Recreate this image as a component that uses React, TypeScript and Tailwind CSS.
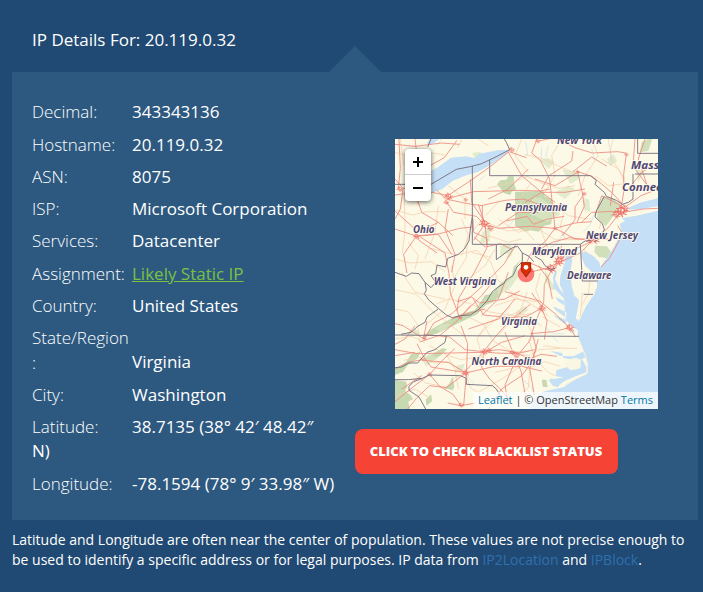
import React from "react";

const rows: { label: string; value: string; link?: boolean }[] = [
  { label: "Decimal:", value: "343343136" },
  { label: "Hostname:", value: "20.119.0.32" },
  { label: "ASN:", value: "8075" },
  { label: "ISP:", value: "Microsoft Corporation" },
  { label: "Services:", value: "Datacenter" },
  { label: "Assignment:", value: "Likely Static IP", link: true },
  { label: "Country:", value: "United States" },
  { label: "State/Region:", value: "Virginia" },
  { label: "City:", value: "Washington" },
  { label: "Latitude:", value: "38.7135 (38° 42′ 48.42″ N)" },
  { label: "Longitude:", value: "-78.1594 (78° 9′ 33.98″ W)" },
];

const places: [string, number, number, number][] = [
  ["New York", 162, 5, 45],
  ["Massachusetts", 236, 29.5, 82],
  ["Connecticut", 227, 51.5, 65],
  ["Pennsylvania", 110, 72, 62],
  ["Ohio", 18, 94, 21.5],
  ["New Jersey", 191, 99.5, 52],
  ["Maryland", 137, 115.5, 45],
  ["Delaware", 172, 139.5, 44.5],
  ["West Virginia", 39, 146, 62],
  ["Virginia", 106, 185.5, 36],
  ["North Carolina", 76.5, 226, 70],
];

// Urban centres: x, y and the radius of the street cluster.
const cities: [number, number, number][] = [
  [678, 216, 22], [664, 226, 16], [690, 208, 14], [600, 300, 18], [584, 306, 12], [492, 366, 18], [468, 388, 18], [500, 356, 10],
  [441, 508, 14], [524, 566, 16], [268, 254, 18], [286, 268, 12], [160, 172, 15], [154, 190, 10], [64, 292, 12], [268, 638, 13],
  [282, 634, 10], [212, 702, 13], [198, 798, 10], [352, 640, 11], [366, 650, 9], [350, 32, 11], [548, 98, 7], [694, 46, 8],
  [428, 6, 9], [14, 150, 11], [568, 164, 8], [480, 268, 8], [104, 706, 9], [88, 598, 8], [196, 536, 8], [212, 182, 8], [776, 140, 7],
];

function MapDrawing() {
  return (
    <svg viewBox="0 0 789 810" className="block h-[270px] w-[263px]">
      <rect width="789" height="810" fill="#fcfae6" />
      <g fill="#c6d9b0">
        <path d="M306 136l10-12 18-2 6-10 16 0 2 26 6 12-14 8-4 10-20-6-6-10zM360 158l84-2 6 16 20 8 6 30 10 10-14 14-4 22-20 4-16 18-26-4-16 4-30-18zM378 362L356 384 350 412 318 432 298 456 286 466 270 468 250 500 238 514 196 526 150 548 104 574 82 596 124 584 196 550 246 526 272 498 296 488 318 468 330 436 352 416 362 388z" />
        <path d="M0 690l34-22 14-22 28-8-8 20-30 20-14 20-24 10zM0 722L34 728 36 744 30 756 46 768 54 780 40 788 44 810H0zM148 750l16-16 8-22 6 30-4 12-16-4zM86 660l28-16 28-16 14 2-20 20-26 16zM92 782l16-16 4 20-18 14z" />
        <path d="M624 172l30 6 24 22-20 28-26 34-26-26 4-32zM600 320l36 2 12 18-10 18-26-4-14-14zM740 10l18-10h14l-12 36-26 4z" opacity=".8" />
        <path d="M440 722l14 0 4 22-14 0zM466 718l12 6 12 20-16-4z" />
      </g>
      <g fill="#d9e5c3" opacity=".75">
        <path d="M434 64l24-8 20 12-16 22zM502 92l44 4 10 22-30 16zM232 42l24-4 10 16-26 8zM396 200l26-28 34 42 26-12 14 24-40 24-58-30zM564 176l18 6 4 38-20-8zM262 280l24-14-2 40-30 10zM306 450l34-30 24-30 14 12-32 44-36 24zM316 320l34-4-6 24-28 8zM480 160l40-20 20 10-30 30zM408 196l26-22 40 30-20 40zM636 60l20-14 10 20-20 16zM722 80l22 20-14 30zM450 390l14 30 20 30-16 4-18-30zM340 332l20-10-10 26-16 14z" />
        <path d="M36 580l26-10 14 12-26 12zM76 658l30-14 22 14-34 24zM186 680l22-6-4 22-22 2zM120 570l20-14 30-2-30 24zM360 520l30-20 10 14-26 16z" />
      </g>
      <g fill="#c5dff6">
        <path d="M104 0H132L118 12 104 18 96 12zM108 96L130 84 168 56 214 52 240 58 252 44 310 34 346 32 330 48 286 78 250 98 206 112 172 126 142 150 110 162z" />
        <path d="M789 178L764 184 735 191 705 204 700 212 735 211 770 205 789 202V215L735 228 680 238 690 246 674 254 680 280 664 310 650 336 630 364 616 384 613 370 596 352 574 338 560 340 558 350 570 380 588 396 606 420 606 440 596 468 574 500 564 520 552 548 548 586 556 614 572 656 578 680 576 704 542 720 516 734 508 744 468 752 440 760 420 776 410 792 406 810H789z" />
        <path d="M524 342L532 360 526 400 530 440 538 470 552 482 548 510 542 540 556 544 552 576 534 564 512 542 508 500 506 462 494 436 496 410 508 376 512 352zM480 392L486 402 480 420 494 450 516 476 508 480 476 446 474 416zM508 486L482 474 488 486 510 502zM514 520L474 502 482 514 514 536zM516 544L474 528 510 556zM530 576L538 572 538 584zM502 642L466 636 494 650 536 652 564 638 572 654 558 662 520 660 504 656zM484 694L524 682 540 666 562 662 574 684 574 700 542 712 518 722 500 714 482 712zM460 722L500 716 526 716 500 732 488 744 474 740z" />
      </g>
      <path d="M510 664l34-8 14 8-2 24-28 6-16-12z" fill="#f9f7e2" />
      <g fill="none" stroke="#c8e0ec" strokeWidth="2">
        <path d="M392 8l6 34-4 10M440 24l-2 40M460 18l-8 36M590 28l10 40M654 0l-8 38 2 36M506 280l-18 30-24 18M366 230l-22 30-20 8M450 566l28 18 30 0M320 530l48 14 38-12M238 734l-28-28M140 0l-16 20M600 220l-16 40-20 20M270 110l-18 16M470 590l20 20M380 720l30 24 10 30" />
      </g>
      <path d="M554 606L573 654 578 680 576 704 542 720 510 740 M606 440L596 468 566 500 550 546" fill="none" stroke="#f6f4df" strokeWidth="3" />
      <g fill="none" stroke="#f6cfb0" strokeWidth="2.3" strokeLinejoin="round">
        <path d="M16 0l10 76 34 32M0 212l52 16 42-10 60 0M2 360l42 12 66-4 40 30M28 156l2 118-8 68M200 2l-12 24M278 148l76-18 42-18 48 22 48 14 48-8M390 46l54 14 44 20 58 26M406 134l-30 44 4 50 50 22 20 56M310 190l-50 52-42 54-4 60-40 66M270 248l66 28 52-6 30 34M108 328l76 20 60-14 44 36 20 52 66 60M0 452l64 14 50 52 52 40 46 36M0 510l40 8 28 40 6 54M126 494l36-14 58 12 60 26 74 12 54-6M220 534l46 22 26 48 56 34 54 0M102 620l54 28 42 14 62-10M26 664l46-10 48 18 44-2 42 30M56 702l36 30 60 12 28-28 32-14M212 702l14 44 36 22 20 42M258 640l-12-42 26-30 42-38 32-26M354 640l48 10 30-18 64-4M400 688l50-20 46 14M368 664l36 32-4 50-22 18M396 460l-18 50-30 36-36 40M450 306l14 36 28 26M506 222l-10 40 14 40M420 262l60 40 72 0M624 234l-12 36M562 460l-6 72M584 430l-4 34-20 36M442 534l54 30M390 540l32 66M436 402l-14 50 20 52" />
        <path d="M0 40l60 16 40-16 50 8M250 0l30 20M380 0l-20 50 40 50M500 0l-30 50 10 60-30 50M590 0l20 50-40 60-20 60M60 60l-10 60 20 80M230 340l60 16M90 560l60-50 30-70-10-60M300 330l-30 50-50 40M340 470l60 20 60 40M300 500l60-20 80 10M250 590l30-40 90-30 70 40M150 640l30 50 10 60M400 600l20 60 40 40 20 10M446 620l60 8 40 0M300 700l60-14 60-20M250 760l70-40 60-40M0 600l50-8 40 20M0 770l60-20 50 30M160 140l50 40 0 60M130 200l-10 80-30 80M40 310l30 40-10 40M600 110l40 30 50-6M620 60l50 30 20 40M640 0l10 60 40 60M470 190l50 40 60 10M410 350l50 0M566 330l10 18M566 396l20 34M20 400l40 60 90 20M200 240l20 50-20 60M310 240l60 40 60-20M380 300l-40 10-60-20" />
      </g>
      <g fill="none" stroke="#ee887e" strokeWidth="2.5" strokeLinejoin="round">
        <path d="M0 16l60 6 80-10 54 4M186 4l-38 52-40 22M12 0l4 88-6 62M112 160l46 10 70-46 56-40 58-46 52 18M160 178l76-20 70-2 68-2 60 2 30-6M124 152l28 28 66 14 44 6 0 66-26 38M258 200l72-16 56-4 68 24 54-8M154 188l22 32 68 12 22 22 44 14 94-6 76 6 60-16 50-4M0 270l66 22 68-8 60-16 38-4M0 216l60 54 12 34 54 38M64 292l-38 54 10 56M76 294l74 48 12 62 4 58 28 74M234 240l2 40 40 18 0 28-38 74-46 76-6 40M186 488l44-14 24 18 76-12 44-24M238 294l32 30 46-10 36 18M334 246l62-14 20 24 42-16 50-8M426 0l-16 42 26 22 28 56 6 56 10 92M534 36l-4 30-68 44-22 40M534 98l56-44 46 28M548 98l14 64 6 40-22 48M568 164l-28 40 0 38-38 48M430 6l50-10 60 30 52 16 76-4 24 4M694 46l-8 60 0 54-8 50M678 216l-38 50-44 34-40 42-50 22-40 18M668 260l12 20-10 30-28 50-24 24M688 206l50-36 51-20M674 222l70-12 45-2M720 0l-6 82 48 64M568 302l-44-6-52 14-66 36-16 36M548 98l44 14 60 50 36 40" />
        <path d="M592 306L550 326 506 352 472 388 448 436 446 490 420 552 404 606 372 644 302 642 210 632 164 594 86 586M402 370l40 18 32 8 20-30M380 398l30 0 56-12M410 462l34 46M330 458L434 486 480 524 524 566M440 508l-46 24-52 4-76-8-30-46M0 632l66 12 198-4 38-48 32-36 72-60M88 600l-64-40-24-6M88 600l28-48 52-26 98-88 62-64 36-60M76 608l60-20 50-42 40-46M66 614l18 36 24 34 60 10 40 6 60-64 46-4 60 10 44-10M266 640l-6 46 24 34 30 28 26 30M354 640l24 56 14 78M354 640l54 18 30-12 48 6M198 560l20 54-4 90-8 96M212 702l-58 44-50-6-38 36-28 34M104 706l-50 38-54 44M104 706l30 36 40 24 24 34 44-8M104 706l34-38 42-40M198 800l-40-8M524 566l-48 12-70 6M524 566l18 28M410 580l14 48-20 60 14 80M366 654l-36 84 10 60M440 510l16 36-8 56M600 300l40 0M430 380l30 40 12 60" />
        <path d="M0 120l24 28 40 2M0 168l60-8 52 0M24 150l-8 60-16 30M60 160l20 60 50 30 44 40M130 250l-60 30M170 346l-40-60-60 4M60 0l6 50-30 40M160 210l-10 60 30 76-10 54M250 196l20 60 6 60M226 120l4 70 40 60M390 190l50-30 70 0 60-10M310 260l60-40 60 0M480 268l-30 40-40 32M480 268l60 32 40 0M560 250l30-30 90-4M600 230l20-60 60 30M420 120l60 20 70-42M340 40l40 70 60 50 40 30M400 90l-60 60-60 30M96 546l-10 50M60 560l-30 40-30 16M170 540l40-14 60-16M300 420l-40 50-60 60M340 400l-30 80-50 50M360 480l-50 60-90 30M270 640l50-30 70-20M350 630l-20-50M210 700l-50-30-80-6M210 702l90-20 80 0 60 14M0 650l60-10M20 750l60-40M280 810l40-60 60-40M430 600l-20 70-30 40M0 690l40-20 50-10M480 380l20-60M646 200l10-70M700 150l40-50 49-30M750 0l-20 60 30 90" />
      </g>
      <g fill="none" stroke="#ec7169" strokeWidth="1.8" strokeLinejoin="round">
        {cities.map(([x, y, r]) => (
          <g key={`${x}-${y}`} transform={`translate(${x} ${y}) scale(${r / 12})`}>
            <path d="M-4 -4L1 -6 6 -3 4 4 -1 6 -6 2ZM-11 2L-4 0 1 2 11 -1M-2 -9L0 -3 -1 3 3 10M-8 -4L-4 -4M4 4L9 6" />
          </g>
        ))}
      </g>
      <g fill="none" stroke="#777080" strokeWidth="2.8" strokeLinejoin="round">
        <path d="M0 136H108L184 91 230 82 260 74 306 52 344 32 334 10 328 0M108 0L98 24M284 62V110H586L604 124 600 136 628 160 634 172 664 184 682 196 700 190 714 180V105M720 105H789M728 0V43H789M232 80V316H556L570 306 588 304M628 172L604 216 600 234 622 254 628 272 616 296 598 308M232 234L226 270 222 306 208 330 190 346 158 358 152 384 126 378 122 404 108 410 122 430 108 446 90 430 94 454 88 464 102 484 130 508 154 528 172 536 196 530 226 528 250 512 260 502 274 488 292 458 312 442 326 434 334 422 354 410 366 384 382 368 382 342 402 352 416 368M382 342L368 322 352 326 304 362V318M420 352L440 364 450 380 466 392 480 388M90 430L72 404 50 402 34 412 0 400M556 316L562 426H608M566 466H594M130 510L96 534 90 550 68 562 48 580 18 586M0 588L156 590 552 592M154 590L150 610 130 624 120 632 96 640 78 660 68 672 42 672 20 684 0 686M0 722H40L82 718 102 708 196 710 214 718V736L292 740 304 750 322 780M82 718L56 728 42 742 42 754 72 774 92 810" />
      </g>
      <g fontFamily="'Noto Sans', sans-serif" fontSize="30" fontWeight="700" fontStyle="italic" fill="#524772" stroke="#fffdf0" strokeWidth="5" strokeLinejoin="round" paintOrder="stroke">
        {places.map(([name, x, y, width]) => (
          <text key={name} x={x * 3} y={y * 3} textLength={width * 3} lengthAdjust="spacingAndGlyphs">{name}</text>
        ))}
      </g>
      <circle cx="393" cy="405" r="25" fill="#ff3333" opacity=".65" />
      <path d="M379 371h28v24l-14 19-14-19z" fill="#d63004" stroke="#a51f0b" strokeWidth="3" strokeLinejoin="round" />
      <circle cx="393" cy="385" r="7" fill="#fff" />
    </svg>
  );
}

export default function App() {
  return (
    <div className="h-[592px] w-[703px] overflow-hidden bg-[#204a73] pl-3 pr-[5px] font-['Open_Sans',sans-serif] text-white">
      <header className="relative h-[72px] pl-5 pt-7">
        <h1 className="text-[17px] font-normal leading-6">IP Details For: 20.119.0.32</h1>
        <svg className="absolute bottom-0 left-[317px] h-[26px] w-[52px]" viewBox="0 0 52 26">
          <path d="M0 26L26 0l26 26z" fill="#2d5980" />
        </svg>
      </header>
      <main className="flex h-[448px] bg-[#2d5980] pl-5">
        <ul className="w-[303px] pt-[28.3px] text-[17px] leading-[24.28px]">
          {rows.map(({ label, value, link }) => (
            <li key={label} className="mb-2">
              <span className="inline-block w-[100px] break-words font-light">{label}</span>
              {link ? <a className="text-[#7ac143] underline">{value}</a> : <span className="font-medium">{value}</span>}
            </li>
          ))}
        </ul>
        <section className="ml-5 pt-[67px]">
          <div className="relative ml-10 h-[270px] w-[263px] overflow-hidden">
            <MapDrawing />
            <div className="absolute left-[10px] top-[10px] w-[26px] rounded-[4px] bg-white shadow-[0_1px_5px_rgba(0,0,0,0.65)]">
              <div className="flex h-[26px] items-center justify-center border-b border-[#ccc]">
                <svg className="size-[10px]" viewBox="0 0 10 10"><path d="M0 5h10M5 0v10" stroke="#000" strokeWidth="2" /></svg>
              </div>
              <div className="flex h-[26px] items-center justify-center">
                <svg className="size-[10px]" viewBox="0 0 10 10"><path d="M0 5h10" stroke="#000" strokeWidth="2" /></svg>
              </div>
            </div>
            <div className="absolute bottom-0 right-0 whitespace-nowrap bg-white/70 px-[5px] pb-px text-[11px] leading-[16px] text-[#333]">
              <a className="text-[#0078a8]">Leaflet</a> | © OpenStreetMap <a className="text-[#0078a8]">Terms</a>
            </div>
          </div>
          <button className="mt-5 flex h-[45px] w-[263px] items-center justify-center whitespace-nowrap rounded-[8px] bg-[#f54336] pr-px text-[13px] font-extrabold">
            CLICK TO CHECK BLACKLIST STATUS
          </button>
        </section>
      </main>
      <p className="pt-[10px] text-[14px] leading-5">
        Latitude and Longitude are often near the center of population. These values are not precise enough to be used to identify a specific address or for legal purposes. IP data from <a className="text-[#2f70af]">IP2Location</a> and <a className="text-[#2f70af]">IPBlock</a>.
      </p>
    </div>
  );
}
